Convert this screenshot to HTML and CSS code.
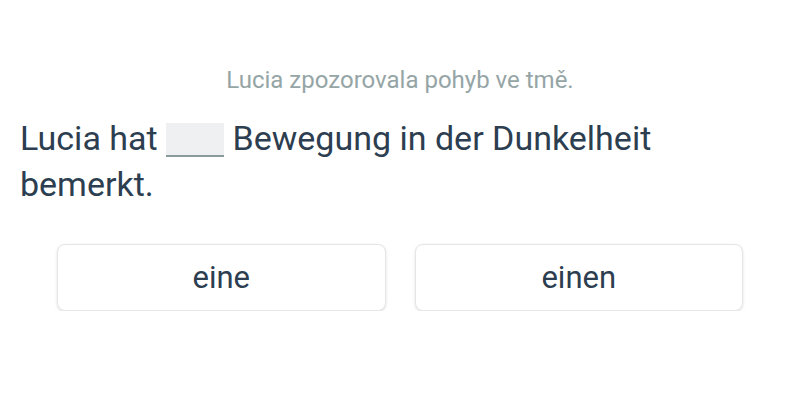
FILE: index.html
```html
<!DOCTYPE html>
<html>
<head>
<meta charset="utf-8">
<link rel="stylesheet" href="styles.css">
</head>
<body>
<div class="card">
  <p class="hint">Lucia zpozorovala pohyb ve tmě.</p>
  <p class="sentence">Lucia hat <span class="blank"></span> Bewegung in der Dunkelheit bemerkt.</p>
  <div class="options">
    <button class="opt">eine</button>
    <button class="opt">einen</button>
  </div>
</div>
</body>
</html>
```
FILE: styles.css
```css
html, body { margin: 0; padding: 0; background: #fff; }
body { font-family: Roboto, "Noto Sans", sans-serif; color: #2c3e50; }
.card { padding: 64px 20px 0; }
.hint { margin: 0; text-align: center; font-size: 24px; color: #95a5a6; line-height: 32px; }
.sentence { margin: 19px 0 0; font-size: 34px; line-height: 46px; }
.blank { display: inline-block; width: 58px; height: 32px; background: #eef0f2; border-bottom: 2px solid #8a9a9b; vertical-align: -7px; }
.options { display: grid; grid-template-columns: 1fr 1fr; gap: 29px; width: 686px; margin: 37px auto 0; }
.opt { height: 67px; background: #fff; border: 1px solid #e4e6e8; border-radius: 8px; box-shadow: 0 1px 3px rgba(0,0,0,0.12); font-family: Roboto, sans-serif; font-size: 31px; color: #2c3e50; }
```
